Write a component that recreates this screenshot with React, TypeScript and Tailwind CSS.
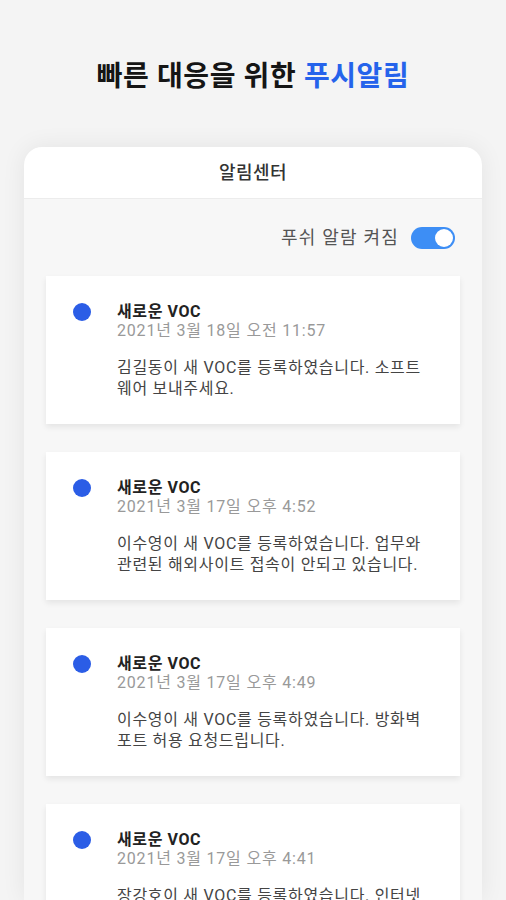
import React from "react";

const items = [
  { date: "2021년 3월 18일 오전 11:57", msg: "김길동이 새 VOC를 등록하였습니다. 소프트웨어 보내주세요." },
  { date: "2021년 3월 17일 오후 4:52", msg: "이수영이 새 VOC를 등록하였습니다. 업무와 관련된 해외사이트 접속이 안되고 있습니다." },
  { date: "2021년 3월 17일 오후 4:49", msg: "이수영이 새 VOC를 등록하였습니다. 방화벽 포트 허용 요청드립니다." },
  { date: "2021년 3월 17일 오후 4:41", msg: "장강호이 새 VOC를 등록하였습니다. 인터넷 연결이 되지 않습니다." },
];

export default function App() {
  return (
    <div
      className="w-[506px] h-[900px] overflow-hidden bg-[#f4f4f4] flex flex-col items-center"
      style={{ fontFamily: 'Roboto, "Noto Sans CJK KR", "Noto Sans", sans-serif' }}
    >
      <h1 className="pt-[59px] text-[28px] leading-[36px] font-bold text-[#151515] tracking-[0.6px]">
        빠른 대응을 위한 <span className="text-[#2563eb]">푸시알림</span>
      </h1>
      <div className="mt-[52px] w-[458px] flex-1 rounded-t-[18px] bg-[#f7f7f7] shadow-[0_0_24px_rgba(0,0,0,0.07)] flex flex-col overflow-hidden">
        <div className="h-[52px] shrink-0 bg-white rounded-t-[18px] border-b border-[#ececec] flex items-center justify-center text-[18px] tracking-[0.5px] text-[#333] font-medium">
          알림센터
        </div>
        <div className="px-[22px] pt-[28px] flex flex-col">
          <div className="flex items-center justify-end gap-[12px] pr-[5px]">
            <span className="text-[18px] leading-[22px] tracking-[1.2px] text-[#555]">푸쉬 알람 켜짐</span>
            <div className="w-[44px] h-[22px] rounded-full bg-[#3d8ef5] flex items-center justify-end pr-[2px]">
              <div className="w-[18px] h-[18px] rounded-full bg-white" />
            </div>
          </div>
          <div className="mt-[27px] flex flex-col gap-[28px]">
            {items.map((it, i) => (
              <div
                key={i}
                className="bg-white shadow-[0_3px_6px_rgba(0,0,0,0.08)] flex pl-[27px] pr-[27px] pt-[26px] pb-[25px] gap-[26px]"
              >
                <div className="w-[18px] h-[18px] mt-[1px] rounded-full bg-[#2b5de6] shrink-0" />
                <div className="flex flex-col flex-1 min-w-0">
                  <div className="text-[16px] leading-[19px] font-bold tracking-[0.6px] text-[#222]">새로운 VOC</div>
                  <div className="text-[16px] leading-[20px] text-[#999] tracking-[0.8px]">{it.date}</div>
                  <div className="mt-[16px] text-[16px] leading-[21px] tracking-[0.7px] text-[#444]">{it.msg}</div>
                </div>
              </div>
            ))}
          </div>
        </div>
      </div>
    </div>
  );
}
